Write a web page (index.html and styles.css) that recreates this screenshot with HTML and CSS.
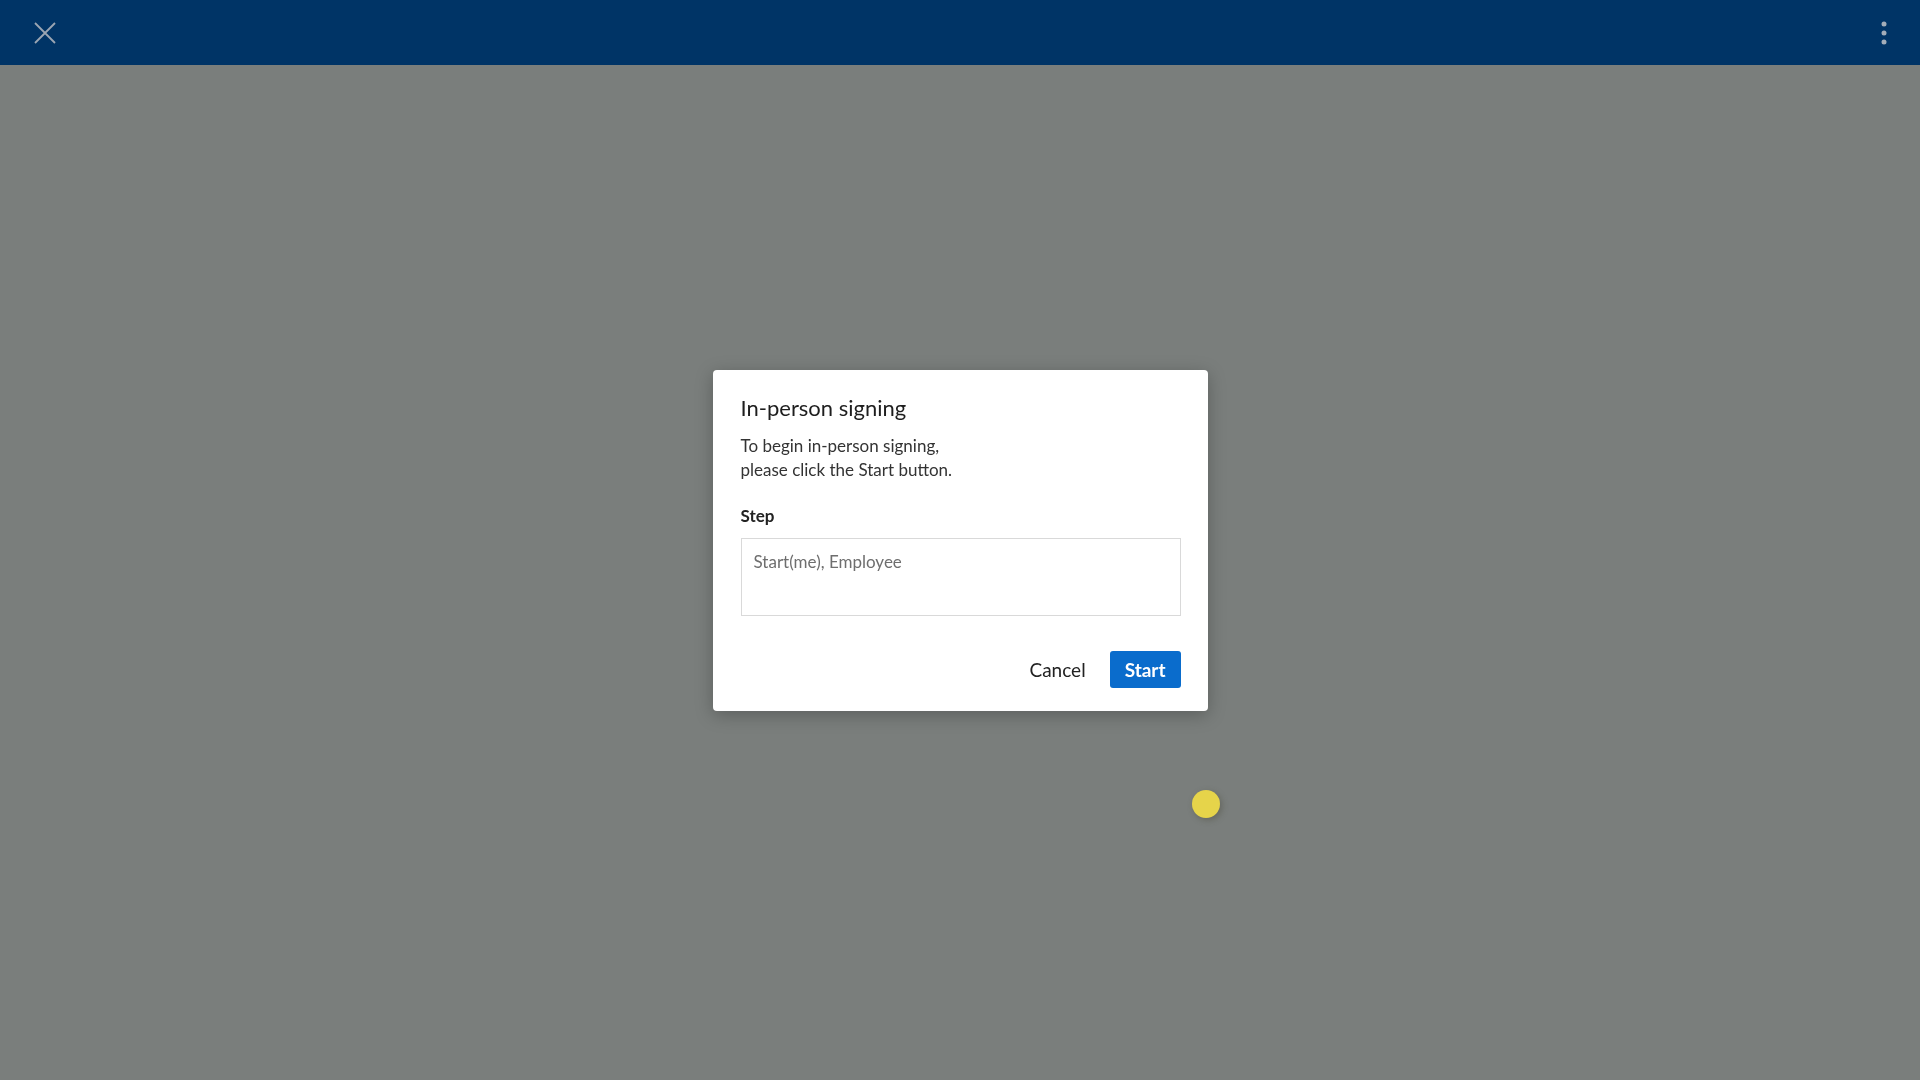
FILE: index.html
```html
<!DOCTYPE html>
<html lang="en">
<head>
  <meta charset="UTF-8" />
  <meta name="viewport" content="width=device-width, initial-scale=1.0" />
  <title>In-person signing</title>
  <link rel="stylesheet" href="styles.css">
</head>
<body>
  <header class="topbar">
    <button class="icon-btn close-btn" aria-label="Close">
      <svg width="24" height="24" viewBox="0 0 24 24">
        <path d="M2 2 L22 22 M22 2 L2 22" stroke="#9ba6b3" stroke-width="1.8" fill="none" />
      </svg>
    </button>
    <button class="icon-btn more-btn" aria-label="More">
      <svg width="8" height="26" viewBox="0 0 8 26">
        <circle cx="4" cy="4" r="2.5" fill="#a3adb9" />
        <circle cx="4" cy="13" r="2.5" fill="#a3adb9" />
        <circle cx="4" cy="22" r="2.5" fill="#a3adb9" />
      </svg>
    </button>
  </header>

  <main class="stage"></main>

  <div class="overlay">
    <div class="dialog">
      <h2 class="dialog-title">In-person signing</h2>
      <p class="dialog-text">To begin in-person signing,<br>please click the Start button.</p>
      <label class="field-label">Step</label>
      <div class="field-box">Start(me), Employee</div>
      <div class="dialog-actions">
        <button class="btn btn-text">Cancel</button>
        <button class="btn btn-primary">Start</button>
      </div>
    </div>
  </div>

  <div class="cursor-dot"></div>
</body>
</html>
```

FILE: styles.css
```css
html, body {
  margin: 0;
  padding: 0;
  height: 100%;
  overflow: hidden;
  font-family: 'Lato', 'Noto Sans', sans-serif;
  background-color: #7a7e7c;
}
.topbar {
  height: 65px;
  background-color: #003466;
  display: flex;
  align-items: center;
  justify-content: space-between;
  padding: 0 32px 0 33px;
}
.icon-btn {
  background: transparent;
  border: none;
  padding: 0;
  cursor: pointer;
  display: flex;
}
.close-btn {
  margin-top: 1px;
}
.stage {
  height: calc(100% - 65px);
}
.overlay {
  position: fixed;
  inset: 0;
  display: flex;
  align-items: center;
  justify-content: center;
}
.dialog {
  width: 495px;
  box-sizing: border-box;
  background: #fff;
  border-radius: 4px;
  padding: 24px 27px 23px 28px;
  box-shadow: 0 4px 18px rgba(0, 0, 0, 0.25);
  color: #1e1e1e;
}
.dialog-title {
  margin: 0;
  font-size: 22px;
  line-height: 28px;
  font-weight: 400;
}
.dialog-text {
  margin: 12px 0 0;
  font-size: 17px;
  line-height: 24px;
  color: #333;
}
.field-label {
  display: block;
  margin-top: 22px;
  font-size: 17px;
  line-height: 24px;
  font-weight: 700;
  color: #222;
}
.field-box {
  margin-top: 10px;
  height: 78px;
  box-sizing: border-box;
  border: 1px solid #d9d9d9;
  padding: 11px 12px;
  font-size: 17px;
  line-height: 24px;
  color: #6e6e6e;
}
.dialog-actions {
  margin-top: 35px;
  display: flex;
  justify-content: flex-end;
  gap: 12px;
}
.btn {
  font-family: inherit;
  font-size: 19px;
  height: 37px;
  border: none;
  border-radius: 3px;
  cursor: pointer;
}
.btn-text {
  background: transparent;
  color: #222;
  padding: 0 12px;
}
.btn-primary {
  background: #0a6ccc;
  color: #fff;
  padding: 0 15px;
  font-weight: 700;
}
.cursor-dot {
  position: absolute;
  left: 1192px;
  top: 790px;
  width: 28px;
  height: 28px;
  border-radius: 50%;
  background: #e6d44a;
  box-shadow: 2px 2px 6px rgba(60, 60, 40, 0.35);
}
```
